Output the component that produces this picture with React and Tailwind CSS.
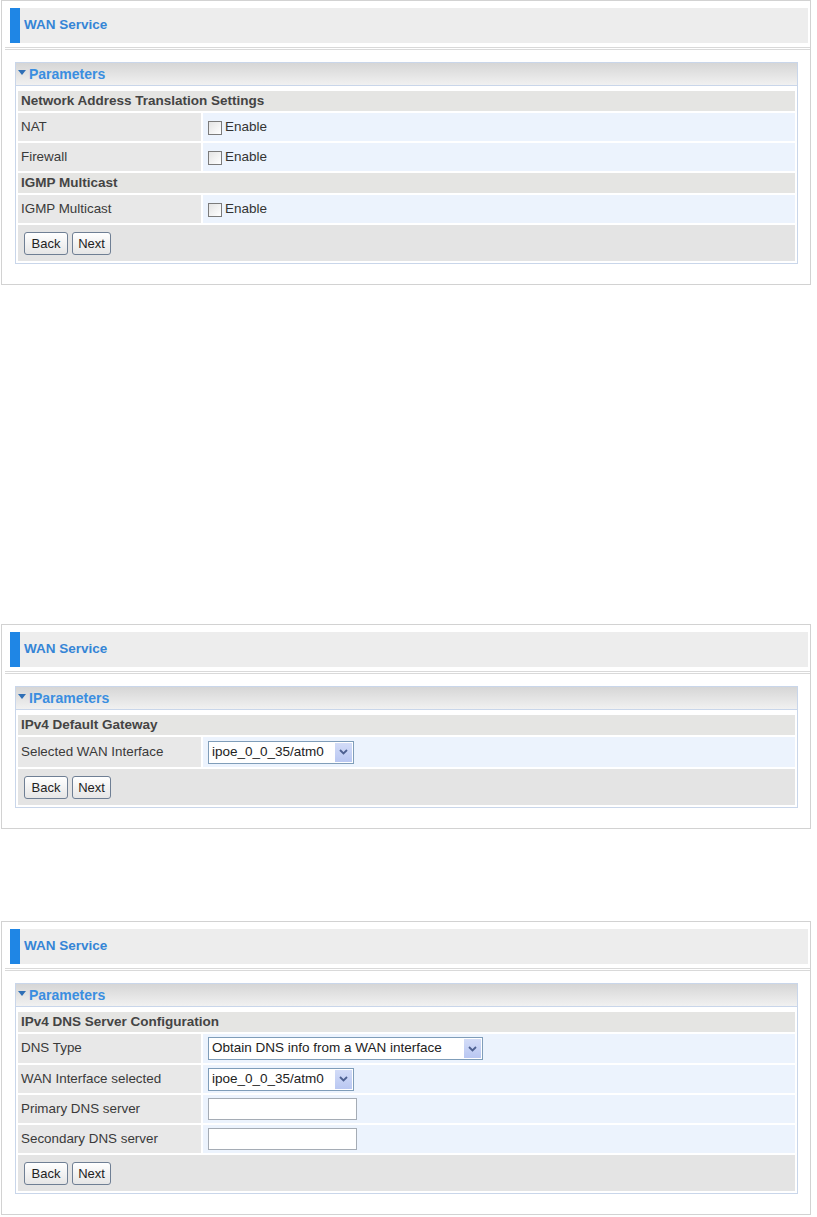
import React from 'react'

const font = { fontFamily: '"Liberation Sans", Arial, sans-serif' }

function Checkbox() {
  return (
    <label className="flex items-center text-[13.5px] text-[#333] pt-[1px]">
      <span className="w-[14px] h-[14px] border border-[#7b7b7b] bg-gradient-to-br from-[#e4e4e4] to-white" />
      <span className="ml-[3px]">Enable</span>
    </label>
  )
}

function Select({ value, width }) {
  return (
    <div
      className={`flex items-center h-[23px] border border-[#7f9db9] bg-white pl-[3px] pr-[1px] ${width}`}
    >
      <span className="flex-1 text-[13.5px] text-[#222] whitespace-nowrap overflow-hidden">{value}</span>
      <span className="w-[17px] h-[19px] bg-gradient-to-b from-[#d3dcf7] to-[#b9c7f2] flex items-center justify-center">
        <svg width="9" height="6" viewBox="0 0 9 6">
          <path d="M1 1 L4.5 4.5 L8 1" fill="none" stroke="#4d6090" strokeWidth="1.8" />
        </svg>
      </span>
    </div>
  )
}

function TextInput() {
  return <div className="w-[149px] h-[22px] border border-[#a5acb5] bg-white" />
}

function Btn({ children, w }) {
  return (
    <button
      className={`h-[23px] ${w} rounded-[3px] border border-[#6f7f94] bg-gradient-to-b from-white to-[#e6e6e6] text-[13px] text-[#222] leading-none`}
    >
      {children}
    </button>
  )
}

function Panel({ title, rows, buttonH = 36, className = '' }) {
  return (
    <div className={`ml-[1px] w-[810px] border border-[#d2d2d2] pt-[7px] pb-[20px] ${className}`}>
      {/* page header */}
      <div className="ml-[8px] mr-[2px] h-[35px] bg-[#ededed] flex items-stretch">
        <div className="w-[10px] bg-[#1f86e5]" />
        <div className="pl-[4px] flex items-center text-[13.5px] font-bold text-[#3585d6]">WAN Service</div>
      </div>
      <div className="ml-[3px] mt-[4px] h-[3px] border-y border-[#d9d9d9]" />

      {/* parameters box */}
      <div className="ml-[13px] mr-[12px] mt-[12px] border border-[#c9d6ea] pb-[2px]">
        <div className="h-[23px] bg-gradient-to-b from-[#d6d6d6] to-[#f1f1f1] border-b border-[#c9d6ea] flex items-center pl-[2px]">
          <svg width="8" height="6" viewBox="0 0 8 6" className="mr-[3px] mb-[3px]">
            <path d="M0 0 H8 L4 5 Z" fill="#2f6fb6" />
          </svg>
          <span className="text-[14px] font-bold text-[#3a8ee0]">{title}</span>
        </div>
        <div className="px-[2px] pt-[5px] flex flex-col gap-[2px]">
          {rows.map((r, i) =>
            r.section ? (
              <div
                key={i}
                className={`${r.h} bg-[#e5e5e3] flex items-center pl-[3px] text-[13.5px] font-bold text-[#444]`}
              >
                {r.label}
              </div>
            ) : (
              <div key={i} className={`${r.h} grid grid-cols-[183px_1fr] gap-[2px]`}>
                <div className="bg-[#e8e8e8] flex items-center pl-[3px] text-[13.4px] text-[#3a3a3a]">
                  {r.label}
                </div>
                <div className="bg-[#ecf3fd] flex items-center pl-[5px]">{r.content}</div>
              </div>
            )
          )}
          <div className={`${buttonH === 37 ? 'h-[37px]' : 'h-[36px]'} bg-[#e4e4e4] flex items-center pl-[6px] gap-[4px]`}>
            <Btn w="w-[44px]">Back</Btn>
            <Btn w="w-[39px]">Next</Btn>
          </div>
        </div>
      </div>
    </div>
  )
}

export default function App() {
  return (
    <div className="bg-white w-[817px] min-h-[1217px]" style={font}>
      <Panel
        title="Parameters"
        rows={[
          { section: true, label: 'Network Address Translation Settings', h: 'h-[20px]' },
          { label: 'NAT', h: 'h-[28px]', content: <Checkbox /> },
          { label: 'Firewall', h: 'h-[28px]', content: <Checkbox /> },
          { section: true, label: 'IGMP Multicast', h: 'h-[20px]' },
          { label: 'IGMP Multicast', h: 'h-[28px]', content: <Checkbox /> },
        ]}
      />

      <Panel
        className="mt-[339px]"
        title="IParameters"
        rows={[
          { section: true, label: 'IPv4 Default Gateway', h: 'h-[20px]' },
          {
            label: 'Selected WAN Interface',
            h: 'h-[30px]',
            content: <Select value="ipoe_0_0_35/atm0" width="w-[146px]" />,
          },
        ]}
      />

      <Panel
        className="mt-[92px]"
        title="Parameters"
        rows={[
          { section: true, label: 'IPv4 DNS Server Configuration', h: 'h-[20px]' },
          {
            label: 'DNS Type',
            h: 'h-[29px]',
            content: <Select value="Obtain DNS info from a WAN interface" width="w-[275px]" />,
          },
          {
            label: 'WAN Interface selected',
            h: 'h-[28px]',
            content: <Select value="ipoe_0_0_35/atm0" width="w-[146px]" />,
          },
          { label: 'Primary DNS server', h: 'h-[28px]', content: <TextInput /> },
          { label: 'Secondary DNS server', h: 'h-[28px]', content: <TextInput /> },
        ]}
      />
    </div>
  )
}
